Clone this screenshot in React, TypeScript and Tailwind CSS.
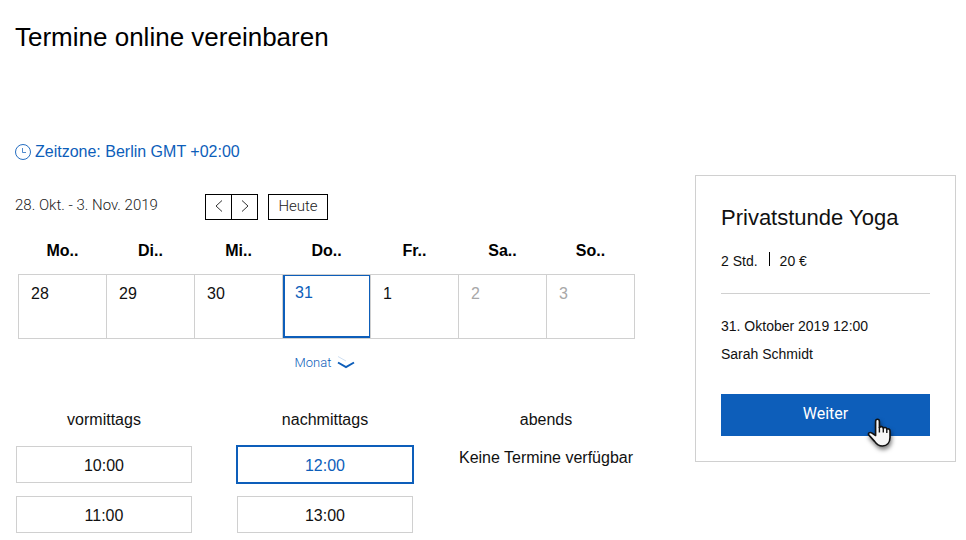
import clsx from "clsx";

type Day = { label: string; state?: "selected" | "disabled" };
type SlotGroup = { title: string; slots: string[] };

const weekdays = ["Mo..", "Di..", "Mi..", "Do..", "Fr..", "Sa..", "So.."];

const days: Day[] = [
  { label: "28" },
  { label: "29" },
  { label: "30" },
  { label: "31", state: "selected" },
  { label: "1" },
  { label: "2", state: "disabled" },
  { label: "3", state: "disabled" },
];

const slotGroups: SlotGroup[] = [
  { title: "vormittags", slots: ["10:00", "11:00"] },
  { title: "nachmittags", slots: ["12:00", "13:00"] },
  { title: "abends", slots: [] },
];

const selectedSlot = "12:00";

function ClockIcon() {
  return (
    <svg width="16" height="16" viewBox="0 0 16 16" fill="none" stroke="currentColor" strokeWidth="0.9" aria-hidden="true">
      <circle cx="8" cy="8" r="7.5" />
      <path d="M7.5 4v4.5H11" opacity="0.8" />
    </svg>
  );
}

function Arrow({ d }: { d: string }) {
  return (
    <svg width="10" height="14" viewBox="0 0 10 14" fill="none" stroke="#333" aria-hidden="true">
      <path d={d} />
    </svg>
  );
}

function HandCursor() {
  return (
    <svg
      className="pointer-events-none absolute top-6 right-[38px] overflow-visible drop-shadow-[1px_3px_2px_rgba(0,0,0,0.5)]"
      width="25"
      height="30"
      viewBox="0 0 25 30"
      aria-hidden="true"
    >
      <path
        d="M8.6 17.5V3.4C8.6 .6 12.4.6 12.4 3.4V9.6C13.2 8.1 16 8.4 16.3 10.2C17.4 9 19.5 9.4 19.8 11.1C21.1 10.2 23 11 23 12.8V19.5C23 25 19.8 28 15.4 28C11.6 28 9.6 26.4 7.6 23.4L1.7 16.9C.6 15.2 2.9 13.7 5 15.1Z"
        fill="#f7f7f7"
        stroke="#111"
        strokeWidth="1.6"
        strokeLinejoin="round"
      />
      <path d="M12.4 9v5.5M16.3 10v4.5M19.8 11v4" stroke="#111" strokeWidth="1.4" />
    </svg>
  );
}

function WeekToolbar() {
  return (
    <div className="mt-[30px] flex items-center font-['Roboto',sans-serif] text-[15px] font-light text-[#222]">
      <span className="w-[190px] pb-1">28. Okt. - 3. Nov. 2019</span>
      <div className="flex">
        <button aria-label="Vorherige Woche" className="flex h-[26px] w-[27px] items-center justify-center border border-black pb-[2px]">
          <Arrow d="M8 1.5 2 7l6 5.5" />
        </button>
        <button aria-label="Nächste Woche" className="-ml-px flex h-[26px] w-[27px] items-center justify-center border border-black pb-[2px]">
          <Arrow d="M2 1.5 8 7l-6 5.5" />
        </button>
      </div>
      <button className="ml-[10px] flex h-[26px] w-[60px] items-center justify-center border border-black pb-[2px]">
        Heute
      </button>
    </div>
  );
}

function WeekCalendar() {
  return (
    <div className="pl-[3px]">
      <table className="w-full table-fixed border-collapse">
        <thead>
          <tr>
            {weekdays.map((day) => (
              <th key={day} scope="col" className="h-[54px] pt-2 font-bold">
                {day}
              </th>
            ))}
          </tr>
        </thead>
        <tbody>
          <tr>
            {days.map((day) => (
              <td key={day.label} className="h-16 border border-[#d0d0d0] p-0">
                <button
                  disabled={day.state === "disabled"}
                  className={clsx(
                    "flex h-[63px] w-full items-start",
                    day.state === "selected"
                      ? "border border-b-2 border-l-2 border-[#0d5eba] pt-[5px] pl-[10px] text-[#0d5eba]"
                      : "pt-[7px] pl-3",
                    day.state === "disabled" && "text-[#a8a8a8]",
                    !day.state && "text-[#111]",
                  )}
                >
                  {day.label}
                </button>
              </td>
            ))}
          </tr>
        </tbody>
      </table>
    </div>
  );
}

function TimeSlots() {
  return (
    <div className="mt-[33px] grid grid-cols-3 gap-x-[45px] px-px text-[#111]">
      {slotGroups.map((group) => (
        <section key={group.title} className="text-center">
          <h2 className="mb-[14px]">{group.title}</h2>
          {group.slots.length === 0 && <p className="whitespace-nowrap">Keine Termine verfügbar</p>}
          <div className="flex flex-col gap-[13px]">
            {group.slots.map((slot) => (
              <button
                key={slot}
                className={clsx(
                  "h-[37px] w-full border pt-[2px]",
                  slot === selectedSlot
                    ? "border-[#0d5eba] text-[#0d5eba] ring-1 ring-[#0d5eba]"
                    : "border-[#d0d0d0]",
                )}
              >
                {slot}
              </button>
            ))}
          </div>
        </section>
      ))}
    </div>
  );
}

function BookingSummary() {
  return (
    <aside className="mt-[35px] w-[261px] shrink-0 self-start border border-[#d0d0d0] px-[25px] pt-7 pb-[25px] text-sm text-[#111]">
      <h2 className="text-[22px] leading-7">Privatstunde Yoga</h2>
      <div className="mt-[19px] flex items-center">
        <span>2 Std.</span>
        <span className="mr-[10px] mb-1 ml-[11px] h-[14px] w-px bg-black" />
        <span>20 €</span>
      </div>
      <hr className="mt-[22px] border-[#d0d0d0]" />
      <p className="mt-[22px]">31. Oktober 2019 12:00</p>
      <p className="mt-2">Sarah Schmidt</p>
      <button className="relative mt-[30px] h-[42px] w-full bg-[#0d5eba] pb-[2px] font-['Roboto',sans-serif] text-base text-white">
        Weiter
        <HandCursor />
      </button>
    </aside>
  );
}

export default function App() {
  return (
    <main className="bg-white pt-[21px] pr-[10px] pb-[7px] pl-[15px] font-['Liberation_Sans',Arial,sans-serif] text-base text-black">
      <h1 className="text-[26px] leading-8">Termine online vereinbaren</h1>

      <div className="mt-[87px] flex gap-[60px]">
        <div className="min-w-0 flex-1">
          <a href="#zeitzone" className="flex items-center gap-1 text-[#0d5eba]">
            <ClockIcon />
            Zeitzone: Berlin GMT +02:00
          </a>

          <WeekToolbar />
          <WeekCalendar />

          <div className="mt-3 flex justify-center">
            <button className="flex h-6 items-center gap-[6px] font-['Roboto',sans-serif] text-[13px] font-light text-[#0d5eba]">
              Monat
              <svg width="18" height="14" viewBox="0 0 18 14" fill="none" stroke="currentColor" aria-hidden="true">
                <path d="M1 0.5 9 5" strokeWidth="0.5" opacity="0.4" />
                <path d="M1 6.5 9 11l8-4.5" strokeWidth="2" />
              </svg>
            </button>
          </div>

          <TimeSlots />
        </div>

        <BookingSummary />
      </div>
    </main>
  );
}
